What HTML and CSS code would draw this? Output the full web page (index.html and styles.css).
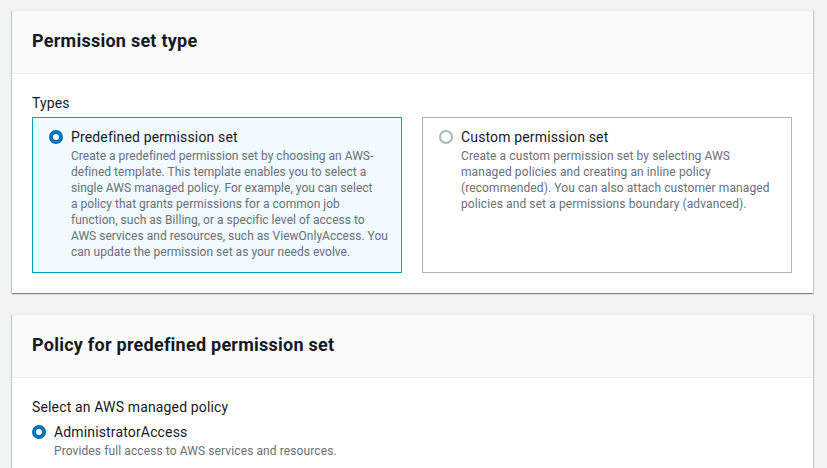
FILE: index.html
```html
<!DOCTYPE html>
<html lang="en">
<head>
<meta charset="utf-8">
<title>Permission set</title>
<link rel="stylesheet" href="styles.css">
</head>
<body>
<main class="page">
  <section class="card">
    <header class="card-header"><h2 class="card-title">Permission set type</h2></header>
    <div class="card-body">
      <div class="field-label">Types</div>
      <div class="tiles">
        <div class="tile tile-selected">
          <span class="radio radio-on"></span>
          <div class="tile-text">
            <div class="option-label">Predefined permission set</div>
            <div class="option-desc desc-fixed">Create a predefined permission set by choosing an AWS-<br>defined template. This template enables you to select a<br>single AWS managed policy. For example, you can select<br>a policy that grants permissions for a common job<br>function, such as Billing, or a specific level of access to<br>AWS services and resources, such as ViewOnlyAccess. You<br>can update the permission set as your needs evolve.</div>
          </div>
        </div>
        <div class="tile">
          <span class="radio"></span>
          <div class="tile-text">
            <div class="option-label">Custom permission set</div>
            <div class="option-desc">Create a custom permission set by selecting AWS managed policies and creating an inline policy (recommended). You can also attach customer managed policies and set a permissions boundary (advanced).</div>
          </div>
        </div>
      </div>
    </div>
  </section>
  <section class="card">
    <header class="card-header"><h2 class="card-title">Policy for predefined permission set</h2></header>
    <div class="card-body">
      <div class="field-label">Select an AWS managed policy</div>
      <div class="radio-row">
        <span class="radio radio-on"></span>
        <div class="tile-text">
          <div class="option-label">AdministratorAccess</div>
          <div class="option-desc">Provides full access to AWS services and resources.</div>
        </div>
      </div>
    </div>
  </section>
</main>
</body>
</html>
```
FILE: styles.css
```css
* { box-sizing: border-box; }
html, body { margin: 0; padding: 0; }
body {
  background: #f2f3f3;
  font-family: Roboto, "Open Sans", sans-serif;
  color: #16191f;
  font-size: 14px;
  line-height: 22px;
}
.page {
  padding: 10px 14px 0 12px;
  display: flex;
  flex-direction: column;
  gap: 21px;
}
.card {
  background: #ffffff;
  border-top: 1px solid #eaeded;
  box-shadow: 0 1px 1px 0 rgba(0, 28, 36, 0.3), 1px 1px 1px 0 rgba(0, 28, 36, 0.15), -1px 1px 1px 0 rgba(0, 28, 36, 0.15);
}
.card-header {
  background: #fafafa;
  border-bottom: 1px solid #eaeded;
  padding: 19px 20px 21px;
}
.card-title {
  margin: 0;
  font-size: 18px;
  line-height: 22px;
  font-weight: 700;
  letter-spacing: 0.25px;
}
.card-body {
  padding: 18px 20px 20px;
}
.field-label {
  font-size: 14px;
  line-height: 22px;
  margin-bottom: 3px;
  letter-spacing: 0.15px;
}
.tiles {
  display: grid;
  grid-template-columns: 370px 370px;
  column-gap: 20px;
}
.tile {
  display: flex;
  gap: 8px;
  border: 1px solid #aab7b8;
  padding: 8px 16px 12px;
  background: #ffffff;
}
.tile-selected {
  border-color: #00a1c9;
  background: #f1faff;
}
.radio {
  flex: none;
  width: 14px;
  height: 14px;
  border-radius: 50%;
  border: 2px solid #aab7b8;
  background: #ffffff;
  margin-top: 4px;
}
.radio-on {
  border: 4px solid #0073bb;
}
.option-label {
  font-size: 14px;
  line-height: 22px;
  letter-spacing: 0.15px;
}
.option-desc {
  font-size: 12px;
  line-height: 16px;
  color: #687078;
  letter-spacing: 0.1px;
}
.desc-fixed {
  white-space: nowrap;
  letter-spacing: 0.02px;
}
.radio-row {
  display: flex;
  gap: 8px;
}
```
